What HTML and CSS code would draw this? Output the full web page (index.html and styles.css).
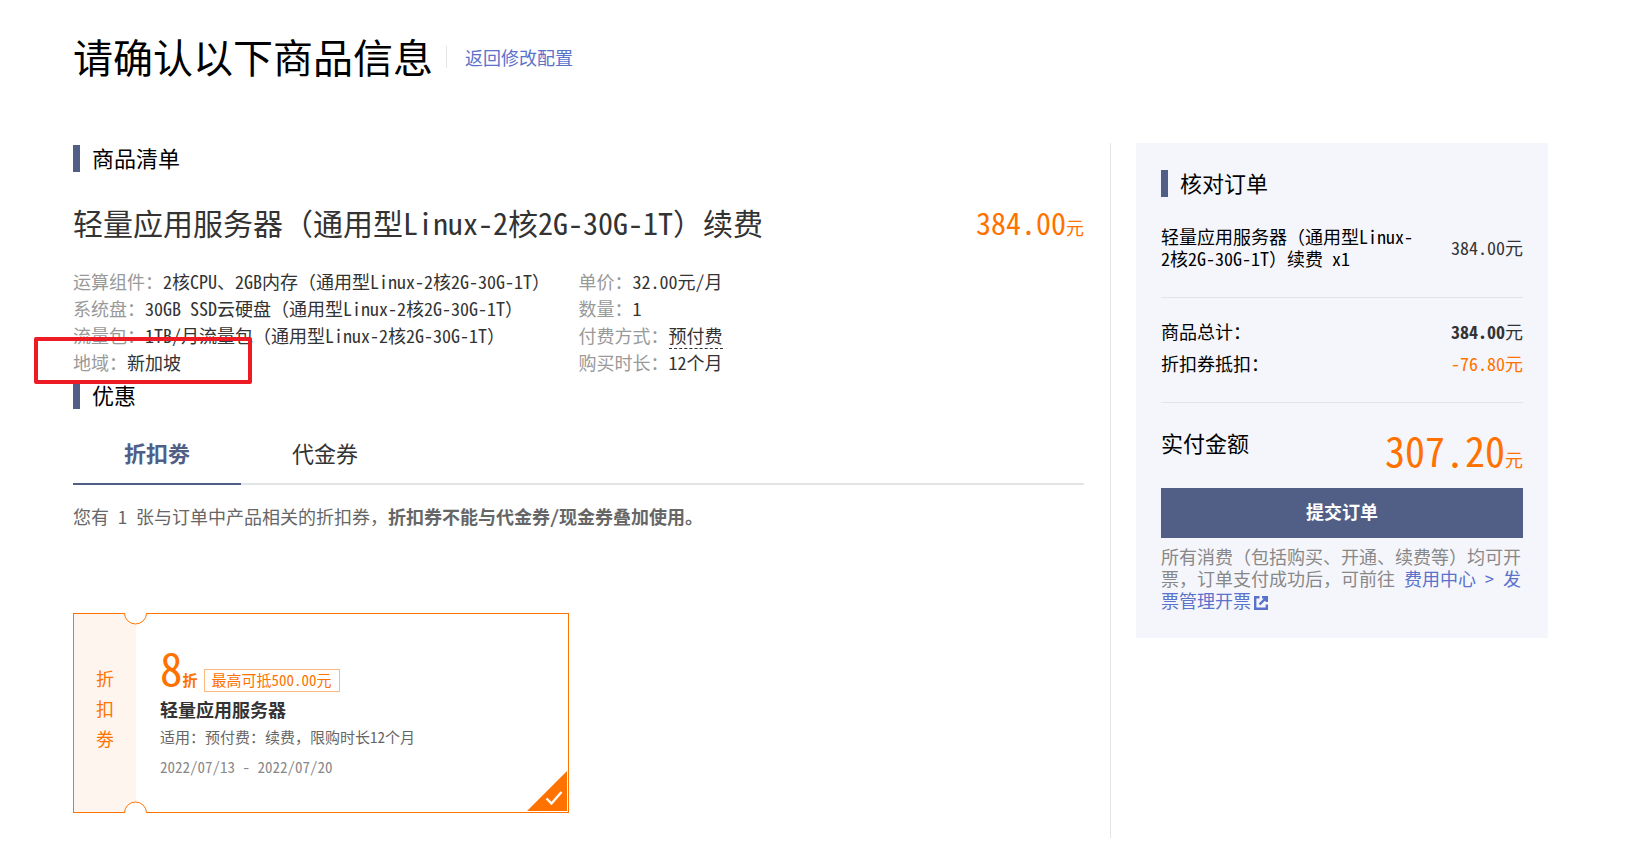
FILE: index.html
```html
<!DOCTYPE html>
<html lang="zh-CN">
<head>
<meta charset="utf-8">
<meta name="viewport" content="width=device-width, initial-scale=1">
<title>确认订单</title>
<link rel="stylesheet" href="styles.css">
</head>
<body>
<div class="page">
  <header class="page-header">
    <h1 class="page-title">请确认以下商品信息</h1>
    <a class="link back-link" href="#">返回修改配置</a>
  </header>

  <div class="layout">
    <main class="main">
      <h2 class="section-title">商品清单</h2>
      <div class="item-head">
        <h3 class="item-name">轻量应用服务器（通用型Linux-2核2G-30G-1T）续费</h3>
        <span class="item-price">384.00<span class="unit">元</span></span>
      </div>
      <div class="details">
        <dl class="specs">
          <div class="spec"><dt>运算组件：</dt><dd>2核CPU、2GB内存（通用型Linux-2核2G-30G-1T）</dd></div>
          <div class="spec"><dt>系统盘：</dt><dd>30GB SSD云硬盘（通用型Linux-2核2G-30G-1T）</dd></div>
          <div class="spec"><dt>流量包：</dt><dd>1TB/月流量包（通用型Linux-2核2G-30G-1T）</dd></div>
          <div class="spec spec-marked"><dt>地域：</dt><dd>新加坡</dd></div>
        </dl>
        <dl class="specs">
          <div class="spec"><dt>单价：</dt><dd>32.00元/月</dd></div>
          <div class="spec"><dt>数量：</dt><dd>1</dd></div>
          <div class="spec"><dt>付费方式：</dt><dd><span class="hint">预付费</span></dd></div>
          <div class="spec"><dt>购买时长：</dt><dd>12个月</dd></div>
        </dl>
      </div>

      <h2 class="section-title">优惠</h2>
      <div class="tabs" role="tablist">
        <button class="tab tab-active" type="button" role="tab" aria-selected="true">折扣劵</button>
        <button class="tab" type="button" role="tab" aria-selected="false">代金券</button>
      </div>
      <p class="notice">您有 1 张与订单中产品相关的折扣券，<strong>折扣券不能与代金券/现金券叠加使用。</strong></p>

      <article class="coupon">
        <div class="stub"><span>折</span><span>扣</span><span>劵</span></div>
        <div class="coupon-body">
          <div class="coupon-value">
            <span class="rate">8<span class="rate-unit">折</span></span>
            <span class="limit">最高可抵500.00元</span>
          </div>
          <h4 class="coupon-name">轻量应用服务器</h4>
          <p class="coupon-scope">适用：预付费：续费，限购时长12个月</p>
          <p class="coupon-date">2022/07/13 - 2022/07/20</p>
        </div>
        <svg class="notch notch-top" width="23" height="12" viewBox="0 0 23 12" aria-hidden="true"><path d="M0 0H23V1H22.500A11 10.500 0 0 1 .5 1H0Z" fill="#fff"/><path d="M.5 0A11 11 0 0 0 22.500 0" fill="none" stroke="#ff7200"/></svg>
        <svg class="notch notch-bottom" width="23" height="12" viewBox="0 0 23 12" aria-hidden="true"><path d="M0 0H23V1H22.500A11 10.500 0 0 1 .5 1H0Z" fill="#fff"/><path d="M.5 0A11 11 0 0 0 22.500 0" fill="none" stroke="#ff7200"/></svg>
        <svg class="check" width="40" height="40" viewBox="0 0 40 40" aria-hidden="true"><path d="M40 0V40H0Z" fill="#ff7200"/><path d="M19.500 27.500L24.500 32.500L34.500 21" fill="none" stroke="#fff" stroke-width="2.400"/></svg>
      </article>
    </main>

    <aside class="summary">
      <h2 class="section-title">核对订单</h2>
      <div class="order-item">
        <span class="order-name">轻量应用服务器（通用型Linux-2核2G-30G-1T）续费 x1</span>
        <span class="order-price">384.00元</span>
      </div>
      <div class="totals">
        <div class="total-row"><span>商品总计：</span><span class="amount"><b>384.00</b>元</span></div>
        <div class="total-row"><span>折扣券抵扣：</span><span class="discount">-76.80元</span></div>
      </div>
      <div class="payable">
        <span class="payable-label">实付金额</span>
        <span class="payable-amount">307.20<span class="unit">元</span></span>
      </div>
      <button class="submit" type="button">提交订单</button>
      <p class="invoice">所有消费（包括购买、开通、续费等）均可开票，订单支付成功后，可前往 <a class="link" href="#">费用中心 &gt; 发票管理开票<svg class="external" width="14" height="14" viewBox="0 0 14 14" aria-hidden="true"><path d="M5.500 1.200H1.200V12.800H12.800V8.500M8 1.200H12.800V6M12.300 1.700L5.500 8.500" fill="none" stroke="currentColor" stroke-width="2.400"/></svg></a></p>
    </aside>
  </div>
</div>
</body>
</html>
```
FILE: styles.css
```css
*,
*::before,
*::after {
  box-sizing: border-box;
}

body {
  margin: 0;
  background: #fff;
  color: #000;
  font-family: "Noto Sans Mono CJK SC", "Noto Sans CJK SC", sans-serif;
  font-size: 18px;
  line-height: 22px;
}

h1, h2, h3, h4, p, dl, dd {
  margin: 0;
  font-weight: 400;
}

button {
  border: 0;
  background: none;
  padding: 0;
  font-family: inherit;
  cursor: pointer;
}

.page {
  padding: 26px 83px 16px 73px;
}

.link {
  color: #5a72cc;
  text-decoration: none;
}

.page-header {
  display: flex;
  align-items: center;
  gap: 13px;
  margin-bottom: 57px;
}

.page-title {
  font-size: 40px;
  line-height: 60px;
}

.back-link {
  margin-top: 2px;
  border-left: 1px solid #e5e5e5;
  padding-left: 18px;
}

.layout {
  display: flex;
  align-items: flex-start;
  gap: 25px;
}

.main {
  flex: 1;
  min-width: 0;
  border-right: 1px solid #e3e4e6;
  padding: 2px 26px 25px 0;
}

.section-title {
  display: flex;
  gap: 12px;
  font-size: 22px;
  line-height: 24px;
}

.section-title::before {
  content: "";
  width: 7px;
  height: 27px;
  background: #515f87;
}

.item-head {
  display: flex;
  justify-content: space-between;
  align-items: baseline;
  margin-top: 30px;
  line-height: 40px;
}

.item-name {
  color: #333;
  font-size: 30px;
}

.item-price {
  color: #ff7200;
  font-size: 30px;
}

.unit {
  font-size: 18px;
}

.details {
  display: grid;
  grid-template-columns: 1fr 1fr;
  margin: 21px 0 6px;
  line-height: 27px;
}

.spec {
  display: flex;
}

.spec dt {
  color: #999;
}

.spec dd {
  color: #333;
}

.spec-marked {
  position: relative;
}

.spec-marked::after {
  content: "";
  position: absolute;
  top: -12px;
  left: -39px;
  width: 218px;
  height: 47px;
  border: 4px solid #ed1c24;
  border-radius: 2px;
}

.hint {
  display: inline-block;
  border-bottom: 1px dashed #333;
  line-height: 25px;
}

.tabs {
  display: flex;
  margin-top: 16px;
  border-bottom: 2px solid #e3e4e6;
}

.tab {
  width: 168px;
  height: 60px;
  margin-bottom: -2px;
  border-bottom: 2px solid transparent;
  padding-bottom: 5px;
  color: #333;
  font-size: 22px;
}

.tab-active {
  border-bottom-color: #515f87;
  color: #515f87;
  font-weight: 700;
}

.notice {
  margin-top: 18px;
  color: #666;
  line-height: 26px;
}

.notice strong {
  font-weight: 700;
}

.coupon {
  position: relative;
  display: flex;
  width: 496px;
  height: 200px;
  margin-top: 84px;
  border: 1px solid #ff7200;
}

.stub {
  display: flex;
  flex-direction: column;
  justify-content: center;
  align-items: center;
  width: 62px;
  padding-bottom: 11px;
  background: #fff5ef;
  color: #ff7200;
  line-height: 30px;
}

.coupon-body {
  padding: 28px 24px 0;
}

.coupon-value {
  display: flex;
  align-items: baseline;
  gap: 6px;
  height: 50px;
  color: #ff7200;
}

.rate {
  font-size: 45px;
  line-height: 50px;
}

.rate-unit {
  font-size: 15px;
  font-weight: 700;
}

.limit {
  border: 1px solid #ffb880;
  padding: 0 7px 2px;
  font-size: 15px;
  line-height: 19px;
}

.coupon-name {
  margin-top: 4px;
  color: #333;
  font-size: 18px;
  font-weight: 700;
  line-height: 26px;
}

.coupon-scope,
.coupon-date {
  color: #666;
  font-size: 15px;
  line-height: 30px;
}

.coupon-date {
  color: #888;
}

.notch {
  position: absolute;
  left: 50px;
}

.notch-top {
  top: -1px;
}

.notch-bottom {
  bottom: -1px;
  transform: scaleY(-1);
}

.check {
  position: absolute;
  right: 1px;
  bottom: 1px;
}

.summary {
  flex: 0 0 412px;
  background: #f5f6fb;
  padding: 27px 25px;
}

.order-item {
  display: flex;
  justify-content: space-between;
  align-items: center;
  margin-top: 28px;
  padding-bottom: 28px;
  border-bottom: 1px solid #e3e4e6;
}

.order-name {
  width: 256px;
}

.order-price,
.amount {
  color: #333;
}

.discount {
  color: #ff7200;
}

.totals {
  padding: 17px 0 23px;
  border-bottom: 1px solid #e3e4e6;
  line-height: 32px;
}

.total-row {
  display: flex;
  justify-content: space-between;
}

.payable {
  display: flex;
  justify-content: space-between;
  padding-top: 23px;
}

.payable-label {
  font-size: 22px;
  line-height: 32px;
}

.payable-amount {
  color: #ff7200;
  font-size: 40px;
  line-height: 48px;
}

.submit {
  width: 100%;
  height: 50px;
  margin-top: 5px;
  padding-bottom: 4px;
  background: #515f87;
  color: #fff;
  font-size: 18px;
  font-weight: 700;
}

.invoice {
  margin-top: 7px;
  color: #888;
}

.external {
  margin-left: 3px;
  vertical-align: -2px;
}
```
